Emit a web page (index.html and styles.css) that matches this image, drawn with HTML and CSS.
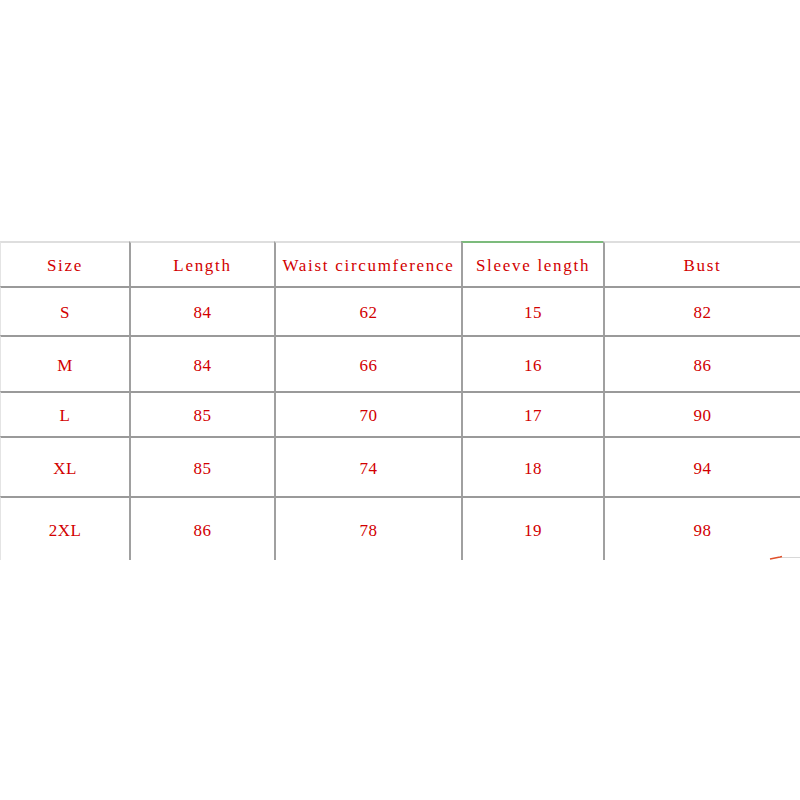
FILE: index.html
```html
<!DOCTYPE html>
<html>
<head>
<meta charset="utf-8">
<link rel="stylesheet" href="styles.css">
</head>
<body>
<div class="page">
  <div class="sheet">
    <div class="cell head first"><span>Size</span></div>
    <div class="cell head"><span>Length</span></div>
    <div class="cell head"><span>Waist circumference</span></div>
    <div class="cell head active"><span>Sleeve length</span></div>
    <div class="cell head"><span>Bust</span></div>

    <div class="cell first r1"><span>S</span></div>
    <div class="cell r1"><span>84</span></div>
    <div class="cell r1"><span>62</span></div>
    <div class="cell r1"><span>15</span></div>
    <div class="cell r1"><span>82</span></div>

    <div class="cell first r2"><span>M</span></div>
    <div class="cell r2"><span>84</span></div>
    <div class="cell r2"><span>66</span></div>
    <div class="cell r2"><span>16</span></div>
    <div class="cell r2"><span>86</span></div>

    <div class="cell first r3"><span>L</span></div>
    <div class="cell r3"><span>85</span></div>
    <div class="cell r3"><span>70</span></div>
    <div class="cell r3"><span>17</span></div>
    <div class="cell r3"><span>90</span></div>

    <div class="cell first r4"><span>XL</span></div>
    <div class="cell r4"><span>85</span></div>
    <div class="cell r4"><span>74</span></div>
    <div class="cell r4"><span>18</span></div>
    <div class="cell r4"><span>94</span></div>

    <div class="cell first r5"><span>2XL</span></div>
    <div class="cell r5"><span>86</span></div>
    <div class="cell r5"><span>78</span></div>
    <div class="cell r5"><span>19</span></div>
    <div class="cell r5"><span>98</span></div>
  </div>
  <svg class="mark" width="32" height="8" viewBox="0 0 32 8">
    <line x1="10" y1="2.5" x2="32" y2="2.5" stroke="#d8d8d8" stroke-width="1"/>
    <path d="M2 4 L12 2 L14 1.5" stroke="#e0502a" stroke-width="1.4" fill="none"/>
  </svg>
</div>
</body>
</html>
```

FILE: styles.css
```css
html, body {
  margin: 0;
  padding: 0;
  background: #ffffff;
}

.page {
  position: relative;
  width: 800px;
  height: 800px;
  padding-top: 241px;
  box-sizing: border-box;
}

.sheet {
  display: grid;
  grid-template-columns: 129px 145px 187px 142px 197px;
  grid-template-rows: 45px 49px 56px 45px 60px 64px;
  width: 800px;
}

.cell {
  box-sizing: border-box;
  display: flex;
  align-items: center;
  justify-content: center;
  border-left: 2px solid #a0a0a0;
  border-top: 2px solid #9a9a9a;
  padding-top: 3px;
  color: #d20000;
  font-family: "Liberation Serif", "DejaVu Serif", serif;
  font-size: 17px;
  letter-spacing: 0.5px;
  white-space: nowrap;
}

.cell.first {
  border-left: 1px solid #e4e4e4;
}

.cell.head {
  border-top: 2px solid #dedede;
  letter-spacing: 1.7px;
}

.cell.head.active {
  border-top: 2px solid #7cbb7c;
}

.mark {
  position: absolute;
  left: 768px;
  top: 555px;
}
```
